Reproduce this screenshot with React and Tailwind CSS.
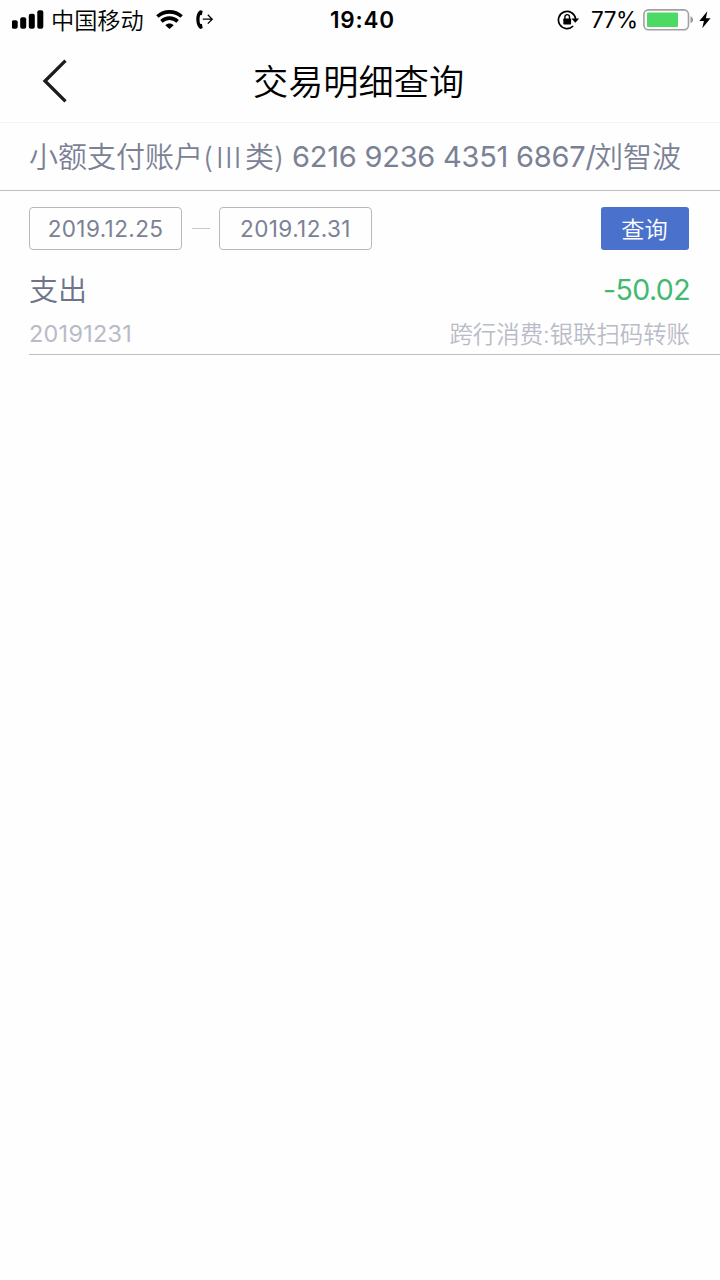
function SignalIcon() {
  return (
    <svg className="block h-[20px] w-[32px] shrink-0" viewBox="0 0 32 20" fill="#000">
      <rect x="-0.3" y="10.3" width="6" height="8.4" rx="2" />
      <rect x="8.2" y="7.3" width="6" height="11.4" rx="2" />
      <rect x="16.8" y="3.7" width="6" height="15" rx="2" />
      <rect x="25.3" y="0.3" width="6" height="18.4" rx="2" />
    </svg>
  );
}

function WifiIcon() {
  return (
    <svg className="block h-[20px] w-[28px] shrink-0" viewBox="0 0 28 20" fill="none" stroke="#000" strokeWidth="3.6">
      <path d="M1.4 6.5C8.3 0.3 18.7 0.3 25.6 6.5" />
      <path d="M5.4 11.3C10.1 7.1 16.9 7.1 21.6 11.3" />
      <path d="M9.3 15.3C11.6 13 15.4 13 17.7 15.3L13.5 19Z" fill="#000" stroke="none" />
    </svg>
  );
}

function CallForwardIcon() {
  return (
    <svg className="block h-[20px] w-[18px] shrink-0" viewBox="0 0 18 20" fill="none">
      <path d="M4.7 0.3C2.2 0.9 0.3 4.6 0.3 9.3C0.3 14.2 2.2 18 4.7 18.9L6.7 18L5.9 14L4.1 13.7C3.4 11 3.4 7.9 4.1 5.2L5.9 5L6.7 1.1Z" fill="#000" />
      <path d="M6.8 9.2H16.2M11.8 4.8L16.2 9.2L11.8 13.6" stroke="#000" strokeWidth="1.3" />
    </svg>
  );
}

function RotationLockIcon() {
  return (
    <svg className="block h-[20px] w-[23px] shrink-0" viewBox="0 0 23 20" fill="none">
      <path d="M16.2 16A8.6 8.6 0 1 1 18.6 9" stroke="#000" strokeWidth="1.7" />
      <path d="M14.4 8.6H22.2L18.3 12.8Z" fill="#000" />
      <rect x="6.3" y="8.4" width="7.8" height="6.2" rx="0.8" fill="#000" />
      <path d="M7.9 9V6.9A2.3 2.3 0 0 1 12.5 6.9V9" stroke="#000" strokeWidth="1.4" />
    </svg>
  );
}

function BatteryIcon() {
  return (
    <svg className="block h-[22px] w-[51px] shrink-0" viewBox="0 0 51 22" fill="none">
      <rect x="0.9" y="0.9" width="44.6" height="19.8" rx="4.5" stroke="#a0a0a0" strokeWidth="1.6" />
      <rect x="4" y="3.5" width="31" height="14.5" rx="1" fill="#4cd964" />
      <path d="M47.5 7.3C49.2 8 50.1 9.5 50.1 10.8C50.1 12.1 49.2 13.6 47.5 14.3Z" fill="#999" />
    </svg>
  );
}

function StatusBar() {
  return (
    <header className="grid h-[40px] grid-cols-[330px_1fr_163px] grid-rows-[40px] text-black">
      <div className="flex items-center pl-[12px]">
        <SignalIcon />
        <span className="ml-[7px] w-[94px] whitespace-nowrap pt-[2px] text-[23.2px] font-[350] leading-[38px]">中国移动</span>
        <span className="ml-[11px]"><WifiIcon /></span>
        <span className="ml-[12px]"><CallForwardIcon /></span>
      </div>
      <span className="text-[22.5px] font-semibold leading-[40px] tracking-[0.8px]">19:40</span>
      <div className="flex items-center">
        <RotationLockIcon />
        <span className="ml-[11px] w-[46px] whitespace-nowrap text-[22.5px] leading-[40px] tracking-[-0.4px]">77%</span>
        <span className="ml-[6px]"><BatteryIcon /></span>
        <svg className="ml-[5px] block h-[18px] w-[12px] shrink-0" viewBox="0 0 12 18" fill="#000">
          <path d="M8.3 0.3L0.3 10H4.9L3.3 17.3L11.5 7.2H6.9Z" />
        </svg>
      </div>
    </header>
  );
}

function TitleBar() {
  return (
    <nav className="flex h-[83px] items-start border-b border-[#f3f3f3]">
      <button className="ml-[42px] mt-[19px] block">
        <svg className="block h-[44px] w-[26px]" viewBox="0 0 26 44" fill="none" stroke="#1c1c1e" strokeWidth="3.3">
          <path d="M23.5 1.7L3 22L23.5 42.3" />
        </svg>
      </button>
      <h1 className="ml-[185px] whitespace-nowrap pt-px text-[35.2px] font-[350] leading-[82px] text-black">交易明细查询</h1>
    </nav>
  );
}

function AccountRow() {
  return (
    <div className="flex h-[68px] whitespace-nowrap border-b border-[#bdbec2] pl-[29px] pt-px text-[29px] font-[350] leading-[67px] text-[#7b8195]">
      <span className="w-[174px]">小额支付账户</span>
      <span className="w-[13px]">(</span>
      <span className="w-[29px] tracking-[1.3px]">III</span>
      <span className="w-[29px]">类</span>
      <span className="w-[18px]">)</span>
      <span className="w-[302px] font-normal leading-[65px] tracking-[-0.23px]">6216 9236 4351 6867/</span>
      <span>刘智波</span>
    </div>
  );
}

function DateField({ children }) {
  return (
    <button className="flex h-[43px] w-[153px] items-center justify-center rounded-[4px] border border-[#b4b8c3] pt-px text-[22.5px] tracking-[0.4px] text-[#7b8195]">
      {children}
    </button>
  );
}

function FilterRow() {
  return (
    <div className="flex h-[75px] items-start pl-[29px] pr-[31px] pt-[16px]">
      <DateField>2019.12.25</DateField>
      <span className="ml-[10px] mr-[9px] mt-[21px] h-px w-[18px] bg-[#c5c8d0]" />
      <DateField>2019.12.31</DateField>
      <button className="ml-auto h-[43px] w-[88px] rounded-[3px] bg-[#4a72cc] pr-px pt-[4px] text-[23.2px] font-[350] leading-[39px] text-white">
        查询
      </button>
    </div>
  );
}

function Transaction() {
  return (
    <article className="ml-[29px] h-[89px] whitespace-nowrap border-b border-[#bdbec2] pr-[30px]">
      <div className="flex h-[46px] items-center justify-between text-[28.5px]">
        <span className="pt-[4px] text-[29px] font-[350] text-[#6d7489]">支出</span>
        <span className="pt-[2px] tracking-[-0.6px] text-[#42b971]">-50.02</span>
      </div>
      <div className="flex h-[42px] items-center justify-between text-[23.4px] text-[#b9bbc7]">
        <span className="pt-px tracking-[0.3px]">20191231</span>
        <span className="pt-[3px] font-[350]">跨行消费:银联扫码转账</span>
      </div>
    </article>
  );
}

export default function App() {
  return (
    <main className="min-h-screen w-full overflow-hidden bg-[#fefefe] font-['Inter','Noto_Sans_CJK_SC',sans-serif]">
      <StatusBar />
      <TitleBar />
      <AccountRow />
      <FilterRow />
      <Transaction />
    </main>
  );
}
